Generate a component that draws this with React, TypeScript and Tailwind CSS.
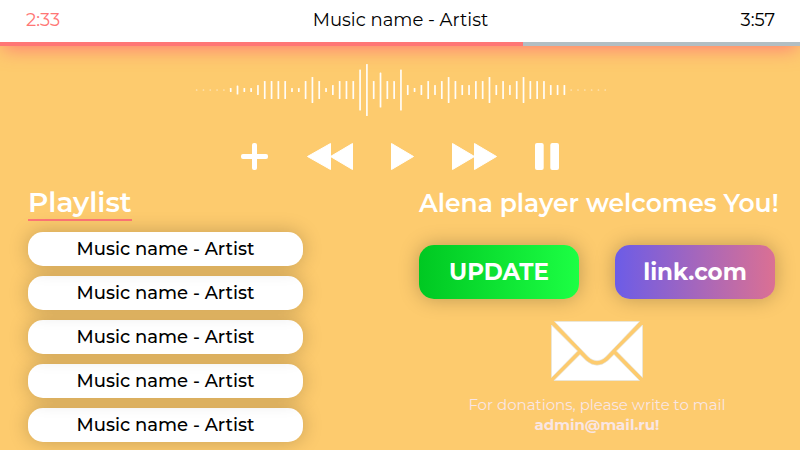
const BARS: number[] = [
  1, 1, 1, 1, 1, 4, 9, 4, 4, 10, 18, 18, 18, 18, 4, 4, 18, 26, 18, 4, 10, 18, 18, 18, 41, 52, 18, 35, 18, 18, 41,
  10, 4, 10, 18, 10, 18, 26, 18, 10, 10, 18, 18, 26, 10, 18, 10, 18, 26, 18, 18, 18, 10, 10, 10, 1, 1, 1, 1, 1, 1,
];

// Earlier tracks sit above later ones so their shadow falls on the next row.
const TRACKS = [
  { title: "Music name - Artist", layer: "z-50" },
  { title: "Music name - Artist", layer: "z-40" },
  { title: "Music name - Artist", layer: "z-30" },
  { title: "Music name - Artist", layer: "z-20" },
  { title: "Music name - Artist", layer: "z-10" },
];

function Header() {
  return (
    <header className="bg-white shadow-[0_5px_20px_-3px_#ff7675]">
      <div className="grid h-[42px] grid-cols-[1fr_auto_1fr] items-center pr-[25px] pb-[2px] pl-[26px] text-lg leading-6 text-black">
        <span className="text-[#ff7675]">2:33</span>
        <h1>Music name - Artist</h1>
        <span className="text-right">3:57</span>
      </div>
      <div role="progressbar" aria-label="Track progress" aria-valuenow={153} aria-valuemax={237} className="h-1 bg-[#b2bec3]">
        <div className="h-full w-[65.4%] bg-[#ff7675]" />
      </div>
    </header>
  );
}

function Waveform() {
  return (
    <svg width="412" height="52" viewBox="0 0 412 52" className="mx-auto mt-[18px]" aria-hidden="true">
      {BARS.map((h, i) => (
        <rect key={i} x={1.8 + i * 6.81} y={26 - h / 2} width="1.7" height={h} rx="0.6" fill="white" fillOpacity={h === 1 ? 0.7 : 0.95} />
      ))}
    </svg>
  );
}

function Controls() {
  return (
    <div className="mt-[27px] flex justify-center gap-[38px] text-white">
      <button type="button" aria-label="Add">
        <svg width="28" height="27" viewBox="0 0 28 27" fill="currentColor">
          <rect x="11" y="0" width="5" height="27" rx="2" />
          <rect x="0" y="11" width="27" height="5" rx="2" />
        </svg>
      </button>
      <button type="button" aria-label="Previous">
        <svg width="46" height="27" viewBox="0 0 46 27" fill="currentColor" stroke="currentColor" strokeWidth="1" strokeLinejoin="round">
          <path d="M.5 13.5 23.5.5v26zM23.5 13.5 45.5.5v26z" />
        </svg>
      </button>
      <button type="button" aria-label="Play">
        <svg width="23" height="27" viewBox="0 0 23 27" fill="currentColor" stroke="currentColor" strokeWidth="1" strokeLinejoin="round">
          <path d="M.5.5v26l22-13z" />
        </svg>
      </button>
      <button type="button" aria-label="Next">
        <svg width="45" height="27" viewBox="0 0 45 27" fill="currentColor" stroke="currentColor" strokeWidth="1" strokeLinejoin="round">
          <path d="M.5.5v26l22-13zM22.5.5v26l22-13z" />
        </svg>
      </button>
      <button type="button" aria-label="Pause">
        <svg width="24" height="27" viewBox="0 0 24 27" fill="currentColor">
          <rect x="0" y="0" width="8.7" height="27" rx="2" />
          <rect x="15.3" y="0" width="8.7" height="27" rx="2" />
        </svg>
      </button>
    </div>
  );
}

function Playlist() {
  return (
    <section className="w-[275px]">
      <h2 className="w-[104px] border-b-2 border-[#ff7675] text-[28px] leading-[34px] font-semibold whitespace-nowrap text-white">Playlist</h2>
      <ul className="mt-[11px] flex flex-col gap-[10px]">
        {TRACKS.map((track) => (
          <li key={track.layer} className={"relative " + track.layer}>
            <button type="button" className="h-[34px] w-full rounded-[15px] bg-white text-lg leading-6 font-medium text-black shadow-[0_0_20px_rgba(0,0,0,0.22)]">
              {track.title}
            </button>
          </li>
        ))}
      </ul>
    </section>
  );
}

function Envelope() {
  return (
    <svg width="92" height="60" viewBox="0 0 92 60" className="mx-auto mt-[22px]" fill="white" stroke="#dfe6e9" strokeWidth="0.6" aria-hidden="true">
      <path d="M3.500 .5H88.500L54.500 36Q46 43.500 37.500 36z" />
      <path d="M.5 4 26.500 30 .5 56.500z" />
      <path d="M91.500 4 65.500 30 91.500 56.500z" />
      <path d="M3 59.500 29 33.500 35.500 40Q46 48.500 56.500 40L63 33.500 88.500 59.500z" />
    </svg>
  );
}

function Welcome() {
  return (
    <section className="w-[356px]">
      <h2 className="text-[25px] leading-[37px] font-semibold whitespace-nowrap text-white">Alena player welcomes You!</h2>
      <div className="mt-[23px] flex justify-between text-[23px] leading-[54px] font-bold text-white">
        <button type="button" className="h-[54px] w-[160px] rounded-[15px] bg-linear-to-r/srgb from-[#00c822] to-[#1cff44] shadow-[0_0_20px_rgba(0,0,0,0.25)]">
          UPDATE
        </button>
        <a href="#link" className="h-[54px] w-[160px] rounded-[15px] bg-linear-to-r/srgb from-[#6c5ce7] to-[#db7093] text-center shadow-[0_0_20px_rgba(0,0,0,0.25)]">
          link.com
        </a>
      </div>
      <Envelope />
      <p className="mt-[14px] text-center text-[15px] leading-5 text-[#f9e6e4]">
        For donations, please write to mail
        <br />
        <a href="mailto:admin@mail.ru" className="font-bold">admin@mail.ru!</a>
      </p>
    </section>
  );
}

export default function App() {
  return (
    <div className="min-h-screen bg-[#fdcb6e] pb-2 font-['Montserrat','Inter',sans-serif]">
      <Header />
      <Waveform />
      <Controls />
      <main className="mt-[15px] flex justify-between pr-[25px] pl-[28px]">
        <Playlist />
        <Welcome />
      </main>
    </div>
  );
}
